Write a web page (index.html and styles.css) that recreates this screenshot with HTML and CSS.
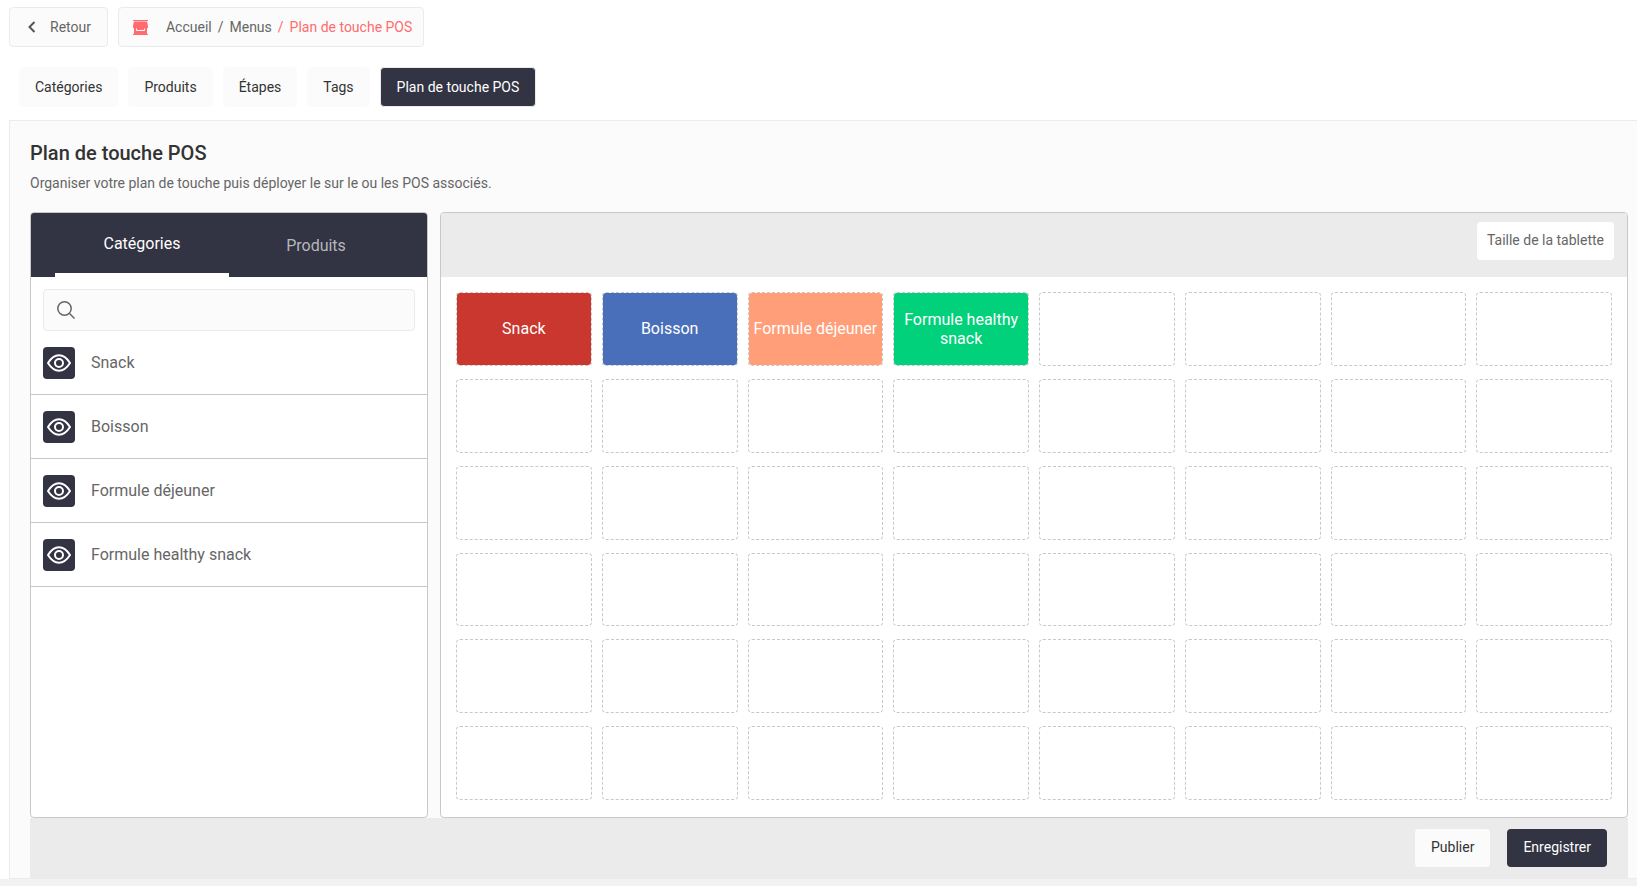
FILE: index.html
```html
<!DOCTYPE html>
<html lang="fr">
<head>
    <meta charset="UTF-8">
    <meta name="viewport" content="width=device-width, initial-scale=1.0">
    <title>Plan de touche POS</title>
    <link rel="stylesheet" href="styles.css">
</head>
<body>
    <svg class="sprite" aria-hidden="true">
        <symbol id="eye" viewBox="0 0 24 24">
            <path d="M1 12C4.500 6.500 8 4.300 12 4.300S19.500 6.500 23 12C19.500 17.500 16 19.700 12 19.700S4.500 17.500 1 12Z"/>
            <circle cx="12" cy="12" r="4"/>
        </symbol>
    </svg>

    <header class="topbar">
        <a href="#" class="box back">
            <svg class="chevron" viewBox="0 0 8 12"><path d="M6.500 1L1.500 6l5 5"/></svg>
            Retour
        </a>
        <nav class="box breadcrumb" aria-label="Fil d'Ariane">
            <svg class="shop" viewBox="0 0 15 15">
                <path d="M0 0h15v1H0zM1 1.500h13L15 6v2h-1v6h1v1H0v-1h1V8H0V6z"/>
                <path class="counter" d="M3.500 8.500v2h8v-2"/>
            </svg>
            <a href="#">Accueil</a>
            <span>/</span>
            <a href="#">Menus</a>
            <span class="current">/</span>
            <a href="#" class="current">Plan de touche POS</a>
        </nav>
    </header>

    <nav class="tabs">
        <a href="#" class="tab">Catégories</a>
        <a href="#" class="tab">Produits</a>
        <a href="#" class="tab">Étapes</a>
        <a href="#" class="tab">Tags</a>
        <a href="#" class="tab active">Plan de touche POS</a>
    </nav>

    <main class="content">
        <h1>Plan de touche POS</h1>
        <p class="intro">Organiser votre plan de touche puis déployer le sur le ou les POS associés.</p>

        <div class="columns">
            <section class="panel side">
                <div class="side-tabs">
                    <button type="button" class="side-tab selected">Catégories</button>
                    <button type="button" class="side-tab">Produits</button>
                </div>
                <label class="search">
                    <svg viewBox="0 0 18 18"><circle cx="7.500" cy="7.500" r="6.700"/><path d="M12.300 12.300l5.200 5.200"/></svg>
                    <input type="text" aria-label="Rechercher">
                </label>
                <ul class="list">
                    <li>
                        <button type="button" class="eye" aria-label="Afficher Snack"><svg><use href="#eye"/></svg></button>
                        Snack
                    </li>
                    <li>
                        <button type="button" class="eye" aria-label="Afficher Boisson"><svg><use href="#eye"/></svg></button>
                        Boisson
                    </li>
                    <li>
                        <button type="button" class="eye" aria-label="Afficher Formule déjeuner"><svg><use href="#eye"/></svg></button>
                        Formule déjeuner
                    </li>
                    <li>
                        <button type="button" class="eye" aria-label="Afficher Formule healthy snack"><svg><use href="#eye"/></svg></button>
                        Formule healthy snack
                    </li>
                </ul>
            </section>

            <section class="panel board">
                <div class="board-head">
                    <button type="button" class="btn size">Taille de la tablette</button>
                </div>
                <div class="keys">
                    <button type="button" class="key red">Snack</button>
                    <button type="button" class="key blue">Boisson</button>
                    <button type="button" class="key orange">Formule déjeuner</button>
                    <button type="button" class="key green">Formule healthy snack</button>
                    <div class="key"></div>
                    <div class="key"></div>
                    <div class="key"></div>
                    <div class="key"></div>

                    <div class="key"></div>
                    <div class="key"></div>
                    <div class="key"></div>
                    <div class="key"></div>
                    <div class="key"></div>
                    <div class="key"></div>
                    <div class="key"></div>
                    <div class="key"></div>

                    <div class="key"></div>
                    <div class="key"></div>
                    <div class="key"></div>
                    <div class="key"></div>
                    <div class="key"></div>
                    <div class="key"></div>
                    <div class="key"></div>
                    <div class="key"></div>

                    <div class="key"></div>
                    <div class="key"></div>
                    <div class="key"></div>
                    <div class="key"></div>
                    <div class="key"></div>
                    <div class="key"></div>
                    <div class="key"></div>
                    <div class="key"></div>

                    <div class="key"></div>
                    <div class="key"></div>
                    <div class="key"></div>
                    <div class="key"></div>
                    <div class="key"></div>
                    <div class="key"></div>
                    <div class="key"></div>
                    <div class="key"></div>

                    <div class="key"></div>
                    <div class="key"></div>
                    <div class="key"></div>
                    <div class="key"></div>
                    <div class="key"></div>
                    <div class="key"></div>
                    <div class="key"></div>
                    <div class="key"></div>
                </div>
            </section>
        </div>

        <div class="actions">
            <button type="button" class="btn publish">Publier</button>
            <button type="button" class="btn save">Enregistrer</button>
        </div>
    </main>
    <div class="bottom"></div>
</body>
</html>
```

FILE: styles.css
```css
*{
    box-sizing: border-box;
}
body{
    margin: 0;
    min-height: 100vh;
    display: flex;
    flex-direction: column;
    background-color: #fff;
    color: #666;
    font-family: Roboto, sans-serif;
    font-size: 14px;
    line-height: 20px;
}
a{
    color: inherit;
    text-decoration: none;
}
button, input{
    font: inherit;
    color: inherit;
    border: 0;
    padding: 0;
    background: none;
}
button{
    cursor: pointer;
}
.sprite{
    display: none;
}

/* top bar */
.topbar{
    display: flex;
    gap: 10px;
    padding: 7px 9px 0;
}
.box{
    display: flex;
    align-items: center;
    height: 40px;
    border: 1px solid #ebebeb;
    border-radius: 4px;
    background-color: #fbfbfb;
}
.back{
    gap: 14px;
    padding: 0 16px 0 18px;
}
.chevron{
    width: 8px;
    height: 12px;
    fill: none;
    stroke: #555;
    stroke-width: 2;
}
.breadcrumb{
    gap: 6px;
    padding: 0 11px 0 14px;
}
.shop{
    width: 15px;
    height: 15px;
    margin-right: 12px;
    fill: #ff6b6e;
}
.counter{
    fill: none;
    stroke: #fbfbfb;
}
.current{
    color: #ff6b6e;
}

/* main tabs */
.tabs{
    display: flex;
    gap: 10px;
    padding: 20px 19px 10px;
}
.tab{
    height: 40px;
    padding: 9px 15px;
    border: 1px solid #fbfbfb;
    border-radius: 4px;
    background-color: #fbfbfb;
    color: #333;
}
.tab.active{
    padding: 9px 16px;
    border-color: #ebebeb;
    background-color: #323343;
    color: #fff;
}

/* content */
.content{
    flex: 1;
    display: flex;
    flex-direction: column;
    margin: 3px 0 0 9px;
    padding: 20px 9px 0 20px;
    border: 1px solid #ebebeb;
    border-right: 0;
    background-color: #fbfbfb;
}
h1{
    margin: 0;
    color: #333;
    font-size: 20px;
    font-weight: 500;
    line-height: 24px;
}
.intro{
    margin: 8px 0 19px;
}
.columns{
    flex: 1;
    display: flex;
    gap: 12px;
}
.panel{
    border: 1px solid #c8c8c8;
    border-radius: 4px;
    background-color: #fff;
    overflow: hidden;
}
.side{
    flex: 0 0 398px;
    font-size: 16px;
}
.side-tabs{
    display: flex;
    height: 64px;
    padding: 0 24px;
    background-color: #323343;
}
.side-tab{
    flex: 1;
    padding-top: 2px;
    color: #b7b7bc;
}
.side-tab.selected{
    border-bottom: 4px solid #fff;
    color: #fff;
}
.search{
    display: flex;
    align-items: center;
    gap: 12px;
    height: 42px;
    margin: 12px 12px 0;
    padding: 0 13px;
    border: 1px solid #ebebeb;
    border-radius: 4px;
    background-color: #fbfbfb;
}
.search svg{
    width: 18px;
    height: 18px;
    fill: none;
    stroke: #666;
    stroke-width: 1.5;
}
.search input{
    flex: 1;
    outline: 0;
}
.list{
    margin: 0;
    padding: 0;
    list-style: none;
}
.list li{
    display: flex;
    align-items: center;
    gap: 16px;
    height: 64px;
    padding: 0 12px;
    border-bottom: 1px solid #c8c8c8;
}
.eye{
    display: flex;
    align-items: center;
    justify-content: center;
    width: 32px;
    height: 32px;
    border-radius: 4px;
    background-color: #323343;
}
.eye svg{
    width: 24px;
    height: 24px;
    fill: none;
    stroke: #fff;
    stroke-width: 2;
}

/* key board */
.board{
    flex: 1;
    display: flex;
    flex-direction: column;
}
.board-head{
    display: flex;
    justify-content: flex-end;
    height: 64px;
    padding: 9px 13px;
    background-color: #ebebeb;
}
.btn{
    height: 38px;
    padding: 0 16px 2px;
    border-radius: 4px;
}
.size{
    padding: 0 10px 2px;
    background-color: #fff;
}
.keys{
    flex: 1;
    display: grid;
    grid-template-columns: repeat(8, 1fr);
    grid-template-rows: repeat(6, 1fr);
    gap: 13px 10px;
    padding: 15px 15px 17px;
}
.key{
    border: 1px dashed #c8c8c8;
    border-radius: 4px;
    background-clip: padding-box;
    color: #fff;
    font-size: 16px;
    line-height: 19px;
}
.red{
    background-color: #c9372f;
}
.blue{
    background-color: #496fba;
}
.orange{
    background-color: #ff9e78;
}
.green{
    background-color: #00d17a;
}

/* footer */
.actions{
    display: flex;
    justify-content: flex-end;
    gap: 17px;
    height: 60px;
    padding: 11px 21px;
    background-color: #ebebeb;
}
.publish{
    background-color: #fbfbfb;
    color: #333;
}
.save{
    background-color: #323343;
    color: #fff;
}
.bottom{
    height: 7px;
    background-color: #f2f2f2;
}
```
